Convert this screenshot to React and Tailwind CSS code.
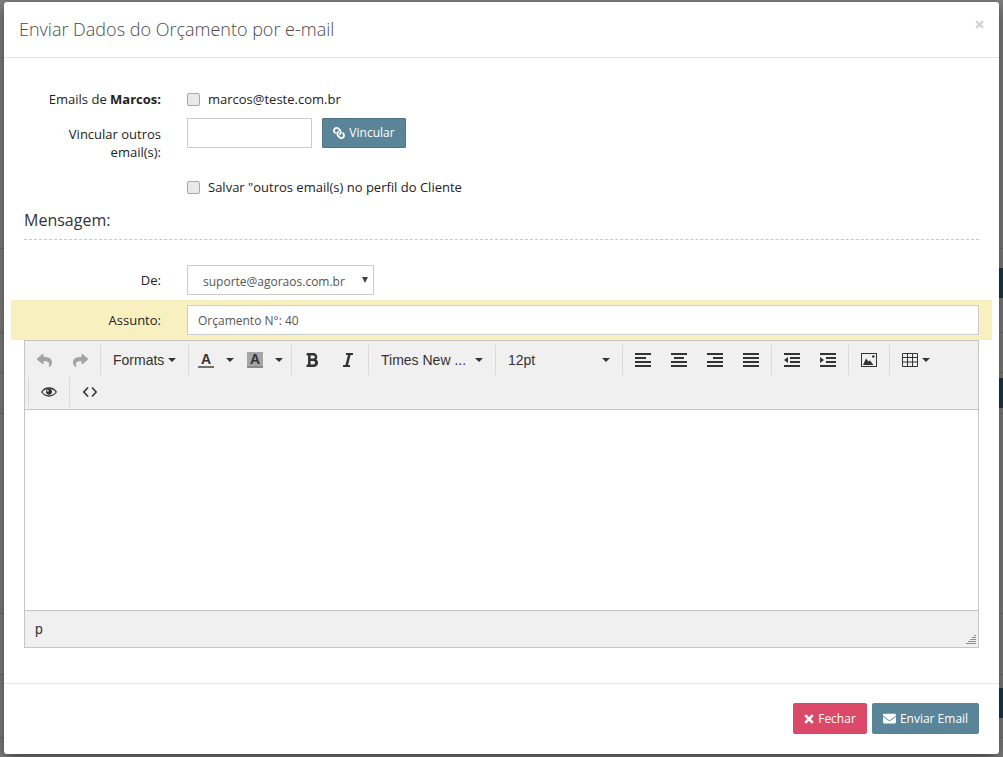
import React from "react";
import { FaLink, FaEnvelope, FaReply, FaShare, FaBold, FaItalic } from "react-icons/fa";

const Caret = () => <span className="inline-block w-0 h-0 border-x-[4px] border-x-transparent border-t-[4px] border-t-[#333]" />;

// fa-times is heavier than the one in react-icons
const Cross = ({ size, color }) => (
  <svg width={size} height={size} viewBox="0 0 10 10" fill="none" stroke={color} strokeWidth="2.6">
    <path d="M1.2 1.2l7.6 7.6M8.8 1.2L1.2 8.8" />
  </svg>
);

// toolbar icons, 16x16 like tinymce's icon font
const Lines = ({ rows, children }) => (
  <svg width="16" height="16" viewBox="0 0 16 16" fill="#333">
    {rows.map(([x, w], i) => (
      <rect key={i} x={x} y={1 + i * 4} width={w} height="2" />
    ))}
    {children}
  </svg>
);

const AlignLeft = () => <Lines rows={[[0, 16], [0, 11], [0, 16], [0, 16]]} />;
const AlignCenter = () => <Lines rows={[[0, 16], [3, 10], [0, 16], [0, 16]]} />;
const AlignRight = () => <Lines rows={[[0, 16], [6, 10], [0, 16], [0, 16]]} />;
const AlignJustify = () => <Lines rows={[[0, 16], [0, 16], [0, 16], [0, 16]]} />;
const Outdent = () => (
  <Lines rows={[[0, 16], [6, 10], [6, 10], [0, 16]]}>
    <path d="M0 8l4-3v6z" />
  </Lines>
);
const Indent = () => (
  <Lines rows={[[0, 16], [6, 10], [6, 10], [0, 16]]}>
    <path d="M4 8L0 5v6z" />
  </Lines>
);

const ImageIcon = () => (
  <svg width="16" height="16" viewBox="0 0 16 16">
    <rect x="0.5" y="1.5" width="15" height="13" fill="none" stroke="#333" />
    <path d="M2 13l3-6.5 2.5 3 1.5-1 3.5 4.5z" fill="#333" />
    <circle cx="12.3" cy="4.5" r="1.3" fill="#333" />
  </svg>
);

const TableIcon = () => (
  <svg width="16" height="16" viewBox="0 0 16 16" fill="none" stroke="#333">
    <path d="M.5 1.5h15v13H.5zM.5 5.5h15M.5 10h15M5.5 1.5v13M10.5 1.5v13" />
  </svg>
);

const EyeIcon = () => (
  <svg width="16" height="16" viewBox="0 0 16 16">
    <path d="M.7 8C2.5 5.4 5 4 8 4s5.500 1.400 7.300 4C13.500 10.600 11 12 8 12S2.500 10.600.7 8z" fill="none" stroke="#333" strokeWidth="1.300" />
    <circle cx="8" cy="7.800" r="3" fill="#333" />
    <circle cx="6.900" cy="6.800" r="0.900" fill="#f0f0f0" />
  </svg>
);

const CodeIcon = () => (
  <svg width="16" height="16" viewBox="0 0 16 16" fill="none" stroke="#333" strokeWidth="1.6">
    <path d="M6 3.5L1.8 8 6 12.5M10 3.5L14.2 8 10 12.5" />
  </svg>
);

const Grip = () => (
  <svg width="10" height="10" viewBox="0 0 10 10" fill="#8f8f8f">
    <rect x="8" y="0" width="2" height="1" />
    <rect x="6" y="2" width="4" height="1" />
    <rect x="4" y="4" width="6" height="1" />
    <rect x="2" y="6" width="8" height="1" />
    <rect x="0" y="8" width="10" height="1" />
  </svg>
);

const Group = ({ children, first }) => (
  <div className={first ? "flex h-[30px] pl-[1px] pr-[2px]" : "flex h-[30px] border-l border-[#d9d9d9] pl-[2px] pr-[2px]"}>{children}</div>
);

const IconBtn = ({ children }) => <div className="flex w-[36px] items-center justify-center">{children}</div>;

const ColorBtn = ({ shaded }) => (
  <div className="flex w-[49px] items-center pl-[7px]">
    <span className={shaded ? "flex h-[16px] w-[16px] items-start justify-center border-b-[2px] border-[#8a8a8a] bg-[#a6a6a6] text-[14px] leading-[15px] font-bold text-[#333]" : "flex h-[16px] w-[16px] items-start justify-center border-b-[2px] border-[#707070] text-[14px] leading-[15px] font-bold text-[#333]"}>
      A
    </span>
    <span className="ml-[12px] flex"><Caret /></span>
  </div>
);

const ListBtn = ({ children }) => (
  <div className="flex w-[122px] items-center justify-between pl-[10px] pr-[10px] text-[14px] text-[#333]">
    <span>{children}</span>
    <Caret />
  </div>
);

function Toolbar() {
  return (
    <div className="h-[69px] border-b border-[#c5c5c5] bg-[#f0f0f0] pt-[4px] font-['Liberation_Sans',sans-serif]">
      <div className="flex">
        <Group first>
          <IconBtn><FaReply className="text-[15px] text-[#a3a3a3]" /></IconBtn>
          <IconBtn><FaShare className="text-[15px] text-[#a3a3a3]" /></IconBtn>
        </Group>
        <Group>
          <div className="flex w-[83px] items-center pl-[10px] text-[14px] text-[#333]">
            <span>Formats</span>
            <span className="ml-[4px] flex"><Caret /></span>
          </div>
        </Group>
        <Group>
          <ColorBtn />
          <ColorBtn shaded />
        </Group>
        <Group>
          <IconBtn><FaBold className="text-[16px] text-[#333]" /></IconBtn>
          <IconBtn><FaItalic className="text-[16px] text-[#333]" /></IconBtn>
        </Group>
        <Group><ListBtn>Times New ...</ListBtn></Group>
        <Group><ListBtn>12pt</ListBtn></Group>
        <Group>
          <IconBtn><AlignLeft /></IconBtn>
          <IconBtn><AlignCenter /></IconBtn>
          <IconBtn><AlignRight /></IconBtn>
          <IconBtn><AlignJustify /></IconBtn>
        </Group>
        <Group>
          <IconBtn><Outdent /></IconBtn>
          <IconBtn><Indent /></IconBtn>
        </Group>
        <Group>
          <IconBtn><ImageIcon /></IconBtn>
        </Group>
        <Group>
          <div className="flex w-[48px] items-center pl-[10px]">
            <TableIcon />
            <span className="ml-[4px] flex"><Caret /></span>
          </div>
        </Group>
      </div>
      <div className="mt-[2px] flex pl-[3px]">
        <Group>
          <IconBtn><EyeIcon /></IconBtn>
        </Group>
        <Group>
          <IconBtn><CodeIcon /></IconBtn>
        </Group>
      </div>
    </div>
  );
}

const Label = ({ children, className = "" }) => (
  <div className={"w-[137px] shrink-0 text-right text-[13px] leading-[18px] text-[#222] " + className}>{children}</div>
);

const Check = ({ children }) => (
  <label className="flex items-center text-[13px] text-[#222]">
    <input type="checkbox" className="h-[13px] w-[13px] appearance-none rounded-[2px] border border-[#a9a9a9] bg-[#e9e9e9]" />
    <span className="ml-[8px] pt-[1px]">{children}</span>
  </label>
);

export default function App() {
  return (
    <div className="relative h-[757px] w-[1003px] overflow-hidden bg-[#808080] pl-[4px] pt-[2px] font-['Open_Sans',sans-serif]">
      {/* what is left of the page behind the backdrop */}
      {[248, 332, 372, 413, 613, 674, 737].map((y) => (
        <div key={y} className="absolute inset-x-0 h-px bg-[#6e6e6e]" style={{ top: y }} />
      ))}
      <div className="absolute right-0 top-[268px] h-[30px] w-[6px] bg-[#1f3a48]" />
      <div className="absolute right-0 top-[378px] h-[30px] w-[6px] bg-[#1f3a48]" />
      <div className="absolute right-0 top-[688px] h-[30px] w-[6px] bg-[#1f3a48]" />

      <div className="relative h-[752px] w-[995px] rounded-[3px] bg-white shadow-[0_5px_15px_rgba(0,0,0,0.5)]">
        <div className="flex h-[56px] items-center justify-between border-b border-[#e5e5e5] pl-[15px] pr-[15px]">
          <h4 className="text-[18px] font-light text-[#4a4a4a]">Enviar Dados do Orçamento por e-mail</h4>
          <span className="mb-[11px] flex"><Cross size={9} color="#d4d4d4" /></span>
        </div>

        <div className="h-[625px] px-[20px] pt-[31px]">
          <div className="flex h-[20px] items-center">
            <Label>Emails de <b>Marcos:</b></Label>
            <div className="ml-[26px]"><Check>marcos@teste.com.br</Check></div>
          </div>

          <div className="mt-[9px] flex items-start">
            <Label className="pt-[7px]">Vincular outros email(s):</Label>
            <input type="text" className="ml-[26px] h-[30px] w-[125px] border border-[#ccc] bg-white" />
            <button className="ml-[10px] flex h-[30px] w-[84px] items-center justify-center gap-[4px] rounded-[1px] border border-[#4d7587] bg-[#5a8599] text-[12px] text-white">
              <FaLink className="-scale-x-100 text-[12px]" />
              Vincular
            </button>
          </div>

          <div className="mt-[16px] flex h-[20px] items-center">
            <div className="ml-[163px]"><Check>Salvar "outros email(s) no perfil do Cliente</Check></div>
          </div>

          <div className="mt-[12px] border-b border-dashed border-[#c8c8c8] pb-[8px] text-[16px] leading-[22px] text-[#333]">Mensagem:</div>

          <div className="mt-[25px] flex items-center">
            <Label>De:</Label>
            <div className="relative ml-[26px]">
              <select className="h-[30px] w-[187px] appearance-none border border-[#ccc] bg-white pl-[15px] pt-[3px] text-[12px] text-[#555]">
                <option>suporte@agoraos.com.br</option>
              </select>
              <span className="absolute right-[6px] top-[12px] h-0 w-0 border-x-[3px] border-x-transparent border-t-[6px] border-t-[#444]" />
            </div>
          </div>

          <div className="-mx-[13px] mt-[5px] flex items-center bg-[#f9f0c0] py-[5px] pl-[13px] pr-[13px]">
            <Label>Assunto:</Label>
            <input type="text" defaultValue="Orçamento N°: 40" className="ml-[26px] h-[30px] min-w-0 flex-1 border border-[#ccc] bg-white px-[10px] text-[12px] text-[#555]" />
          </div>

          <div className="border border-[#c5c5c5]">
            <Toolbar />
            <div className="h-[201px] border-b border-[#c5c5c5] bg-white" />
            <div className="flex h-[36px] items-center justify-between bg-[#f0f0f0] pl-[10px] pr-[2px] font-['Liberation_Sans',sans-serif] text-[14px] text-[#333]">
              <span>p</span>
              <span className="mt-[22px] flex"><Grip /></span>
            </div>
          </div>
        </div>

        <div className="flex h-[71px] items-start justify-end gap-[5px] border-t border-[#e5e5e5] pr-[20px] pt-[19px] text-[12px] text-white">
          <button className="flex h-[31px] w-[74px] items-center justify-center gap-[4px] rounded-[2px] bg-[#dc4867]">
            <Cross size={10} color="#fff" />
            Fechar
          </button>
          <button className="flex h-[31px] w-[107px] items-center justify-center gap-[4px] rounded-[2px] bg-[#5a8599]">
            <FaEnvelope className="text-[13px]" />
            Enviar Email
          </button>
        </div>
      </div>
    </div>
  );
}
